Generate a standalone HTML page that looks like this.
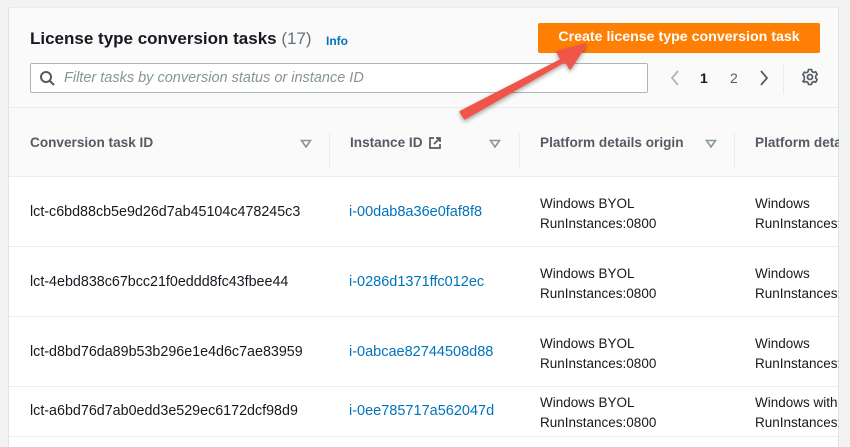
<!DOCTYPE html>
<html><head><meta charset="utf-8"><style>
*{margin:0;padding:0;box-sizing:border-box}
body{width:850px;height:440px;background:#f2f3f3;font-family:"Liberation Sans",Arial,sans-serif;position:relative;overflow:hidden;color:#16191f}
.card{position:absolute;left:8px;top:7px;width:831px;height:440px;background:#fff;border-left:1px solid #e1e4e4;border-right:1px solid #e1e4e4;border-top:1px solid #eaeded}
.hdr{position:absolute;left:0;top:0;width:100%;height:169px;background:#fafafa}
.abs{position:absolute;white-space:nowrap}
.line{position:absolute;left:0;width:100%;height:1px;background:#eaeded}
.title{left:21px;top:21px;font-size:17px;font-weight:bold;color:#16191f}
.title span{font-weight:normal;color:#687078}
.info{left:317px;top:26px;font-size:12px;font-weight:bold;color:#0073bb}
.btn{left:529px;top:15px;width:282px;height:30px;background:#ff7f05;color:#fff;font-weight:bold;font-size:14.2px;text-align:center;line-height:29px;border-radius:2px}
.search{left:21px;top:55px;width:618px;height:30px;border:1px solid #aab7b8;border-radius:2px;background:#fff}
.search i{position:absolute;left:33px;top:6px;font-style:italic;color:#879596;font-size:14.5px}
.th{font-size:13.6px;font-weight:bold;color:#545b64;top:127px}
.sep{position:absolute;top:125px;width:1px;height:34px;background:#eaeded}
.td{font-size:13.5px;color:#16191f}
.id{font-size:14.3px;color:#16191f}
.lnk{font-size:14.5px;color:#0073bb}
</style></head><body>
<div class="card">
<div class="hdr"></div>
<div class="abs title">License type conversion tasks <span>(17)</span></div>
<div class="abs info">Info</div>
<div class="abs btn">Create license type conversion task</div>
<div class="abs search">
<svg style="position:absolute;left:8px;top:6px" width="17" height="17" viewBox="0 0 17 17"><circle cx="7" cy="7" r="5" fill="none" stroke="#545b64" stroke-width="2"/><path d="M11 11l4 4" stroke="#545b64" stroke-width="2"/></svg>
<i>Filter tasks by conversion status or instance ID</i></div>
<svg class="abs" style="left:660px;top:61px" width="12" height="18"><path d="M9 2L3 9l6 7" fill="none" stroke="#aab7b8" stroke-width="1.8"/></svg>
<div class="abs" style="left:691px;top:62px;font-size:14px;font-weight:bold">1</div>
<div class="abs" style="left:721px;top:62px;font-size:14px;color:#545b64">2</div>
<svg class="abs" style="left:749px;top:61px" width="12" height="18"><path d="M3 2l6 7-6 7" fill="none" stroke="#545b64" stroke-width="1.8"/></svg>
<div class="sep" style="left:774px;top:56px;height:30px"></div>
<svg class="abs" style="left:792px;top:60px" width="18" height="18" viewBox="0 0 18 18"><circle cx="9" cy="9" r="2.5" fill="none" stroke="#545b64" stroke-width="1.8"/><path d="M7.5 1.5h3l.5 2 1.7 1 2-.7 1.5 2.6-1.5 1.4v2.4l1.5 1.4-1.5 2.6-2-.7-1.7 1-.5 2h-3l-.5-2-1.7-1-2 .7L1.8 13.3l1.5-1.4V9.5 8.1L1.8 6.7l1.5-2.6 2 .7 1.7-1z" fill="none" stroke="#545b64" stroke-width="1.6" stroke-linejoin="round"/></svg>
<div class="line" style="top:99px"></div>
<div class="abs th" style="left:21px">Conversion task ID</div>
<svg class="abs" style="left:291px;top:131px" width="12" height="10"><path d="M1.5 1.5h9L6 8z" fill="none" stroke="#879596" stroke-width="1.6"/></svg>
<div class="sep" style="left:320px"></div>
<div class="abs th" style="left:341px">Instance ID</div>
<svg class="abs" style="left:419px;top:128px" width="14" height="14"><path d="M6 2H2v10h10V8M8 2h4v4M12 2L6 8" fill="none" stroke="#545b64" stroke-width="1.7"/></svg>
<svg class="abs" style="left:480px;top:131px" width="12" height="10"><path d="M1.5 1.5h9L6 8z" fill="none" stroke="#879596" stroke-width="1.6"/></svg>
<div class="sep" style="left:510px"></div>
<div class="abs th" style="left:531px">Platform details origin</div>
<svg class="abs" style="left:696px;top:131px" width="12" height="10"><path d="M1.5 1.5h9L6 8z" fill="none" stroke="#879596" stroke-width="1.6"/></svg>
<div class="sep" style="left:725px"></div>
<div class="abs th" style="left:746px">Platform details</div>
<div class="line" style="top:168px"></div>
<div class="line" style="top:238px"></div>
<div class="line" style="top:308px"></div>
<div class="line" style="top:378px"></div>
<div class="line" style="top:428px"></div>

<div class="abs id" style="left:21px;top:196px">lct-c6bd88cb5e9d26d7ab45104c478245c3</div>
<div class="abs lnk" style="left:340px;top:196px">i-00dab8a36e0faf8f8</div>
<div class="abs td" style="left:531px;top:186px;line-height:20px">Windows BYOL<br>RunInstances:0800</div>
<div class="abs td" style="left:746px;top:186px;line-height:20px">Windows<br>RunInstances:0800</div>

<div class="abs id" style="left:21px;top:266px">lct-4ebd838c67bcc21f0eddd8fc43fbee44</div>
<div class="abs lnk" style="left:340px;top:266px">i-0286d1371ffc012ec</div>
<div class="abs td" style="left:531px;top:256px;line-height:20px">Windows BYOL<br>RunInstances:0800</div>
<div class="abs td" style="left:746px;top:256px;line-height:20px">Windows<br>RunInstances:0800</div>

<div class="abs id" style="left:21px;top:336px">lct-d8bd76da89b53b296e1e4d6c7ae83959</div>
<div class="abs lnk" style="left:340px;top:336px">i-0abcae82744508d88</div>
<div class="abs td" style="left:531px;top:326px;line-height:20px">Windows BYOL<br>RunInstances:0800</div>
<div class="abs td" style="left:746px;top:326px;line-height:20px">Windows<br>RunInstances:0800</div>

<div class="abs id" style="left:21px;top:395px">lct-a6bd76d7ab0edd3e529ec6172dcf98d9</div>
<div class="abs lnk" style="left:340px;top:395px">i-0ee785717a562047d</div>
<div class="abs td" style="left:531px;top:385px;line-height:20px">Windows BYOL<br>RunInstances:0800</div>
<div class="abs td" style="left:746px;top:385px;line-height:20px">Windows with<br>RunInstances:0800</div>
</div>
<div style="position:absolute;left:839px;top:0;width:11px;height:440px;background:#f2f3f3"></div>
<svg style="position:absolute;left:0;top:0" width="850" height="440">
<defs><filter id="s" x="-20%" y="-20%" width="140%" height="140%"><feDropShadow dx="0" dy="2" stdDeviation="2" flood-color="#000" flood-opacity="0.35"/></filter></defs>
<g filter="url(#s)">
<path d="M461 112 L562 60 L558 52 L585 45 L570 68 L566 60 L465 118 Z" fill="#f0544a" stroke="#f0544a" stroke-width="3" stroke-linejoin="round"/>
</g>
</svg>
</body></html>
